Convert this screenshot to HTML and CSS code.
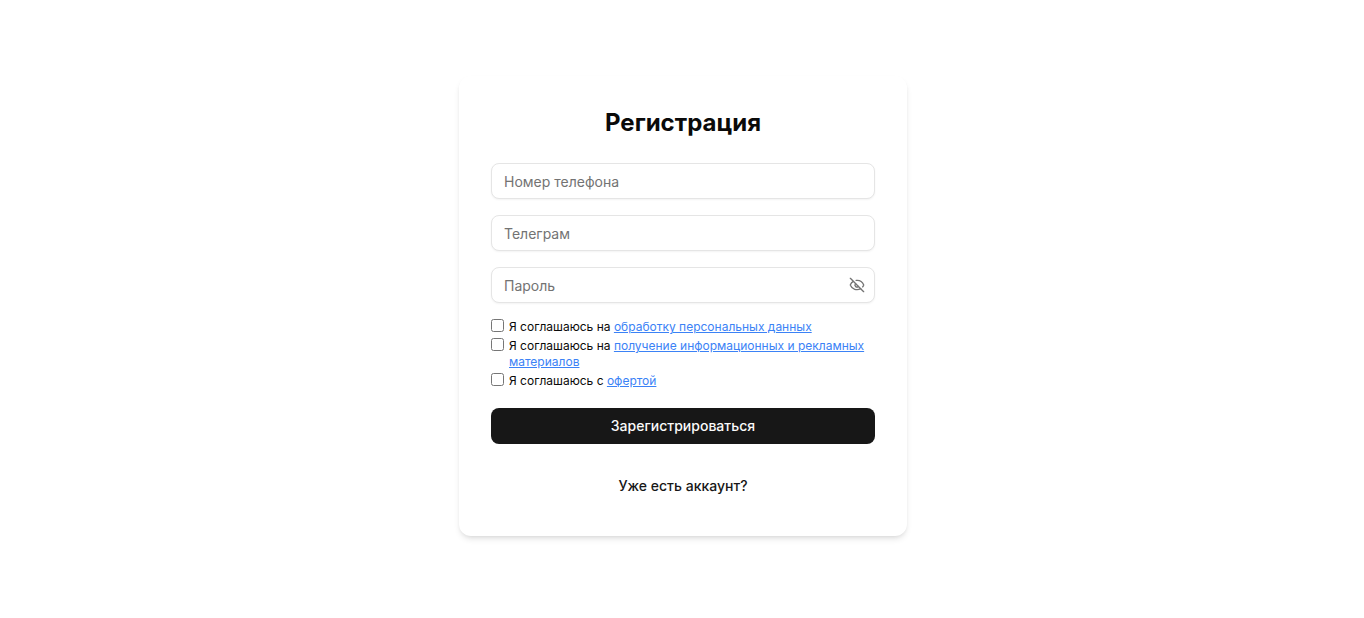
FILE: index.html
```html
<!DOCTYPE html>
<html lang="ru">
<head>
	<meta charset="UTF-8">
	<title>Регистрация</title>
	<link rel="stylesheet" href="styles.css">
</head>
<body>
	<div class="page">
		<form class="card">
			<h1 class="title">Регистрация</h1>

			<div class="fields">
				<input class="field" type="text" placeholder="Номер телефона">
				<input class="field" type="text" placeholder="Телеграм">
				<div class="password">
					<input class="field" type="password" placeholder="Пароль">
					<span class="eye">
						<svg width="16" height="16" viewBox="0 0 24 24" fill="none" stroke="currentColor" stroke-width="2" stroke-linecap="round" stroke-linejoin="round">
							<path d="M10.733 5.076a10.744 10.744 0 0 1 11.205 6.575 1 1 0 0 1 0 .696 10.747 10.747 0 0 1-1.444 2.49"/>
							<path d="M14.084 14.158a3 3 0 0 1-4.242-4.242"/>
							<path d="M17.479 17.499a10.75 10.75 0 0 1-15.417-5.151 1 1 0 0 1 0-.696 10.75 10.75 0 0 1 4.446-5.143"/>
							<path d="m2 2 20 20"/>
						</svg>
					</span>
				</div>
			</div>

			<div class="agree">
				<label class="agree-row">
					<input class="check" type="checkbox">
					<span>Я соглашаюсь на <a href="#">обработку персональных данных</a></span>
				</label>
				<label class="agree-row">
					<input class="check" type="checkbox">
					<span>Я соглашаюсь на <a href="#">получение информационных и рекламных материалов</a></span>
				</label>
				<label class="agree-row">
					<input class="check" type="checkbox">
					<span>Я соглашаюсь с <a href="#">офертой</a></span>
				</label>
			</div>

			<button class="submit" type="button">Зарегистрироваться</button>

			<button class="login" type="button">Уже есть аккаунт?</button>
		</form>
	</div>
</body>
</html>
```

FILE: styles.css
```css
*{margin: 0;padding: 0;box-sizing: border-box;}
body{background-color: #fff;color: #0a0a0a;font-family: Inter, "Noto Sans", sans-serif;}

.page{display: flex;justify-content: center;padding: 76px 0 0 2px;min-height: 618px;}
.card{width: 448px;height: 460px;padding: 31px 32px 32px;background-color: #fff;border-radius: 12px;box-shadow: 0 4px 6px -1px rgba(0,0,0,.1),0 2px 4px -2px rgba(0,0,0,.1);}

.title{font-size: 24px;line-height: 32px;font-weight: 700;text-align: center;margin-bottom: 24px;}

.fields{display: flex;flex-direction: column;gap: 16px;}
.field{display: block;width: 100%;height: 36px;padding: 0 12px;border: 1px solid #e5e5e5;border-radius: 8px;background: #fff;font-family: inherit;font-size: 14px;color: #0a0a0a;outline: none;box-shadow: 0 1px 2px rgba(0,0,0,.05);}
.field::placeholder{color: #737373;opacity: 1;}

.password{position: relative;}
.eye{position: absolute;top: 10px;right: 10px;width: 16px;height: 16px;color: #737373;}
.eye svg{display: block;}

.agree{margin-top: 16px;display: flex;flex-direction: column;gap: 3px;font-size: 12px;line-height: 16px;}
.agree-row{display: flex;align-items: flex-start;gap: 5px;}
.agree-row a{color: #3b82f6;}
.check{width: 13px;height: 13px;margin: 0;flex: none;}

.submit{display: block;width: 100%;height: 36px;margin-top: 19px;padding-bottom: 2px;border: 0;border-radius: 8px;background-color: #171717;color: #fafafa;font-family: inherit;font-size: 14px;font-weight: 500;}
.login{display: block;width: 100%;height: 36px;margin-top: 23px;border: 0;background: none;color: #171717;font-family: inherit;font-size: 14px;font-weight: 500;}
```
